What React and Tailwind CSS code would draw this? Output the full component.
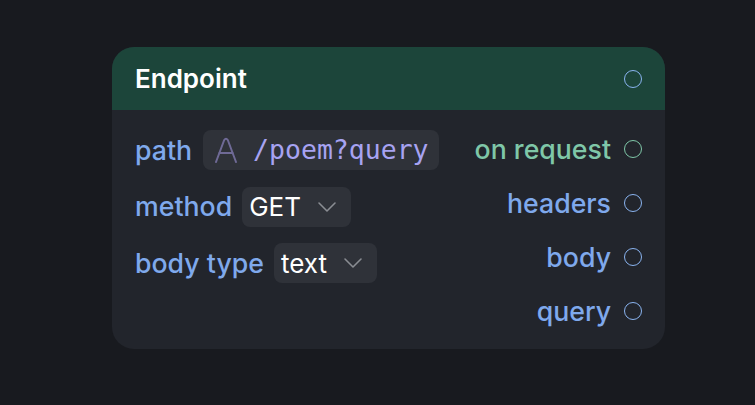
import React from 'react';

const Port = ({ color = 'border-[#8ab4f0]' }) => (
  <span className={`block w-[18px] h-[18px] rounded-full border-[1.5px] ${color}`} />
);

const Chevron = () => (
  <svg width="20" height="12" viewBox="0 0 20 12" fill="none" stroke="#8a8d93" strokeWidth="1.6" strokeLinecap="round" strokeLinejoin="round">
    <path d="M2 2 L10 10 L18 2" />
  </svg>
);

const TextIcon = () => (
  <svg width="24" height="26" viewBox="0 0 24 26" fill="none" stroke="#6f6a96" strokeWidth="2" strokeLinecap="round" strokeLinejoin="round">
    <path d="M2 25 L10.2 3 Q12 0.6 13.8 3 L22 25" />
    <path d="M5.5 16 L18.5 16" />
  </svg>
);

const Select = ({ value }) => (
  <div className="h-[40px] flex items-center gap-[16px] pl-[7px] pr-[14px] rounded-[8px] bg-[#2f3239] text-white font-normal text-[26px]">
    <span>{value}</span>
    <Chevron />
  </div>
);

export default function App() {
  const font = { fontFamily: 'Inter, "Noto Sans", sans-serif' };
  return (
    <div className="w-[755px] h-[405px] bg-[#181a1f] pl-[112px] pt-[47px]" style={font}>
      <div className="w-[553px] h-[302px] rounded-[22px] overflow-hidden bg-[#22252c] flex flex-col">
        <div className="h-[63px] shrink-0 bg-[#1c453a] flex items-center justify-between pl-[23px] pr-[23px]">
          <span className="text-[26px] font-semibold text-white">Endpoint</span>
          <Port />
        </div>
        <div className="flex justify-between pl-[23px] pr-[23px] text-[26.7px] font-medium text-[#7fa9ec]">
          <div className="flex flex-col gap-[16.5px] pt-[20px]">
            <div className="flex items-center gap-[11px] h-[40px]">
              <span>path</span>
              <div className="h-[40px] flex items-center gap-[15px] pl-[11px] pr-[10px] rounded-[8px] bg-[#2f3239]">
                <TextIcon />
                <span className="text-[#a7a3f2] text-[26.5px] font-normal" style={{ fontFamily: '"DejaVu Sans Mono", monospace' }}>/poem?query</span>
              </div>
            </div>
            <div className="flex items-center gap-[10px] h-[40px]">
              <span>method</span>
              <Select value="GET" />
            </div>
            <div className="flex items-center gap-[10px] h-[40px]">
              <span>body type</span>
              <Select value="text" />
            </div>
          </div>
          <div className="flex flex-col items-end pt-[12px]">
            <div className="h-[54px] flex items-center gap-[13px]">
              <span className="text-[#7fc7a8]">on request</span>
              <Port color="border-[#7fc7a8]" />
            </div>
            <div className="h-[54px] flex items-center gap-[13px]">
              <span>headers</span>
              <Port />
            </div>
            <div className="h-[54px] flex items-center gap-[13px]">
              <span>body</span>
              <Port />
            </div>
            <div className="h-[54px] flex items-center gap-[13px]">
              <span>query</span>
              <Port />
            </div>
          </div>
        </div>
      </div>
    </div>
  );
}
